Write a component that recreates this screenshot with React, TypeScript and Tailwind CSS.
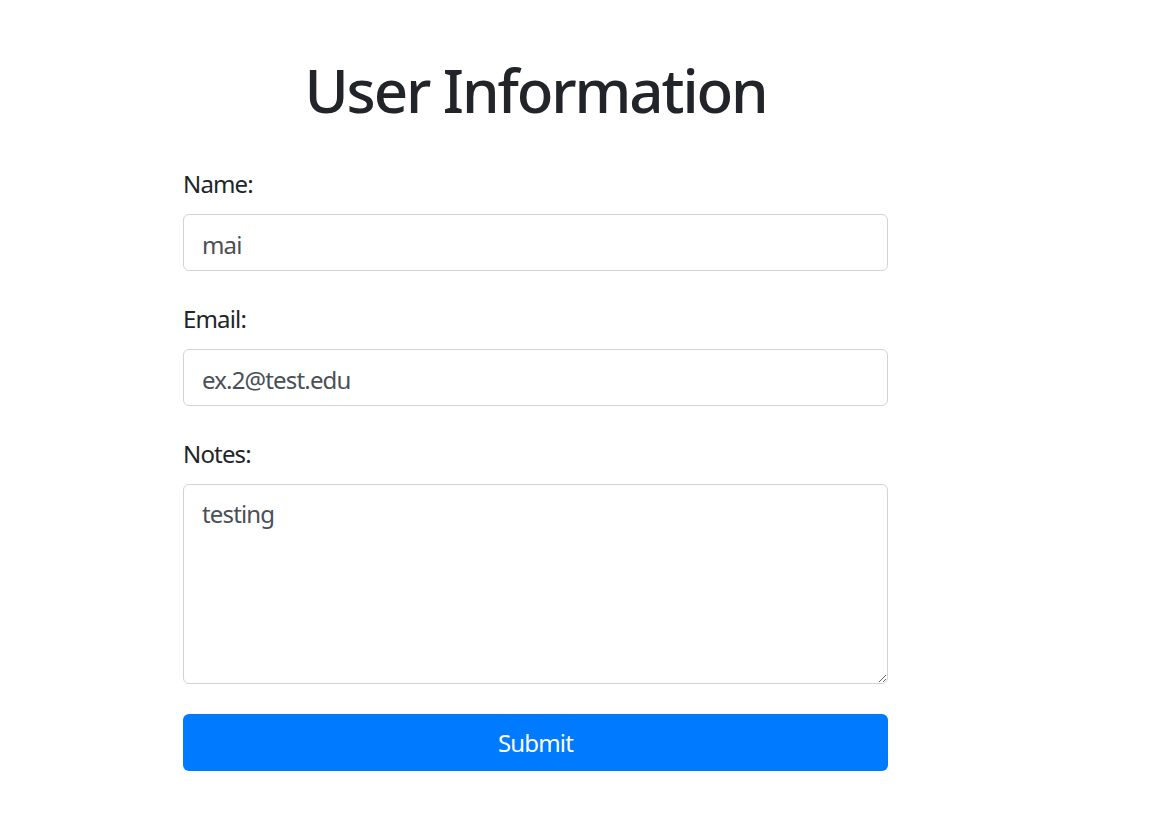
import { useState } from 'react';

const FONT = { fontFamily: '"Noto Sans", "Open Sans", "Liberation Sans", sans-serif' };

export default function App() {
  const [name, setName] = useState('mai');
  const [email, setEmail] = useState('ex.2@test.edu');
  const [notes, setNotes] = useState('testing');

  const label = 'block text-[24px] leading-[36px] tracking-[-0.035em] mb-[12px]';
  const field =
    'block w-full h-[57px] px-[18px] pt-[3px] border border-[#ced4da] rounded-[6px] bg-white text-[24px] tracking-[-0.035em] text-[#495057] outline-none';

  return (
    <div className="min-h-screen bg-white text-[#212529]" style={FONT}>
      <div className="ml-[183px] w-[705px] pt-[54px]">
        <h1 className="text-center text-[60px] leading-[72px] font-medium tracking-[-0.035em] text-[#212529]">
          User Information
        </h1>

        <form className="mt-[40px]" onSubmit={e => e.preventDefault()}>
          <div className="mb-[30px]">
            <label className={label}>Name:</label>
            <input className={field} value={name} onChange={e => setName(e.target.value)} />
          </div>

          <div className="mb-[30px]">
            <label className={label}>Email:</label>
            <input className={field} value={email} onChange={e => setEmail(e.target.value)} />
          </div>

          <div className="mb-[30px]">
            <label className={label}>Notes:</label>
            <textarea
              className="block w-full h-[200px] px-[18px] pt-[11px] pb-[9px] border border-[#ced4da] rounded-[6px] bg-white text-[24px] leading-[36px] tracking-[-0.035em] text-[#495057] outline-none resize-y"
              value={notes}
              onChange={e => setNotes(e.target.value)}
            />
          </div>

          <button type="submit" className="block w-full h-[57px] rounded-[6px] bg-[#007bff] text-white text-[24px] tracking-[-0.035em]">
            Submit
          </button>
        </form>
      </div>
    </div>
  );
}
